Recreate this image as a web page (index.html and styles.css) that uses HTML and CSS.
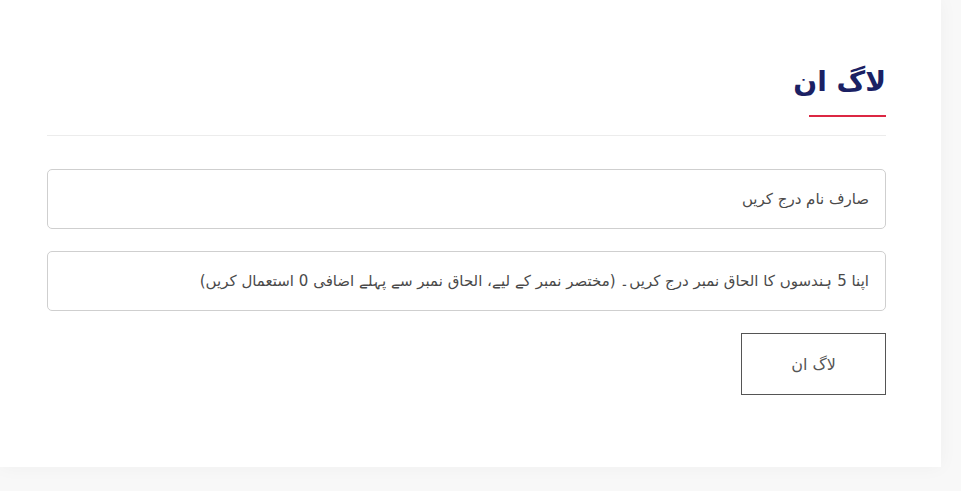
FILE: index.html
```html
<!DOCTYPE html>
<html lang="ur">
<head>
<meta charset="utf-8">
<title>لاگ ان</title>
<link rel="stylesheet" href="styles.css">
</head>
<body>
<div class="card" dir="rtl">
  <div class="head">
    <h1 class="title">لاگ ان</h1>
    <div class="accent"></div>
  </div>
  <form class="form">
    <input class="field" type="text" placeholder="صارف نام درج کریں">
    <input class="field" type="text" placeholder="اپنا 5 ہندسوں کا الحاق نمبر درج کریں۔ (مختصر نمبر کے لیے، الحاق نمبر سے پہلے اضافی 0 استعمال کریں)">
    <div class="actions"><button class="btn" type="button">لاگ ان</button></div>
  </form>
</div>
</body>
</html>
```
FILE: styles.css
```css
html, body { margin: 0; padding: 0; }
body {
  background: #f8f8f8;
  font-family: "DejaVu Sans", "Noto Sans", sans-serif;
  width: 961px;
  height: 491px;
  overflow: hidden;
}
.card {
  box-sizing: border-box;
  width: 941px;
  height: 467px;
  background: #fff;
  box-shadow: 0 0 18px rgba(0,0,0,0.04);
  padding: 0 55px 0 47px;
}
.head {
  padding-top: 59px;
  border-bottom: 1px solid #ececec;
  padding-bottom: 18px;
}
.title {
  margin: 0;
  font-size: 28px;
  font-weight: bold;
  color: #1b2164;
  line-height: 46px;
  padding-bottom: 10px;
}
.accent {
  width: 77px;
  height: 2px;
  background: #dc2743;
}
.form {
  padding-top: 33px;
  display: flex;
  flex-direction: column;
  gap: 22px;
}
.field {
  box-sizing: border-box;
  height: 60px;
  width: 100%;
  border: 1px solid #cfcfcf;
  border-radius: 5px;
  padding: 0 16px;
  font-family: "DejaVu Sans", sans-serif;
  font-size: 15px;
  color: #444;
  direction: rtl;
}
.field::placeholder { color: #4a4a4a; }
.actions { display: flex; }
.btn {
  width: 145px;
  height: 62px;
  background: #fff;
  border: 1px solid #555;
  border-radius: 0;
  font-family: "DejaVu Sans", sans-serif;
  font-size: 16px;
  color: #555;
}
```
